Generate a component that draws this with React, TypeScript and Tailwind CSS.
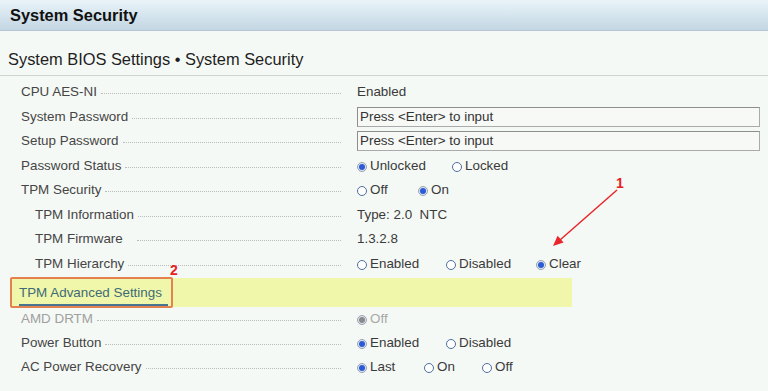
import React from "react";

type Opt = { label: string; on?: boolean; w: string };

type Row = {
  label: string;
  indent?: boolean;
  gap?: string;
  disabled?: boolean;
  kind: "text" | "input" | "radio";
  text?: string;
  opts?: Opt[];
};

const topRows: Row[] = [
  { label: "CPU AES-NI", kind: "text", text: "Enabled" },
  { label: "System Password", kind: "input", text: "Press <Enter> to input" },
  { label: "Setup Password", kind: "input", text: "Press <Enter> to input" },
  {
    label: "Password Status",
    kind: "radio",
    opts: [
      { label: "Unlocked", on: true, w: "w-[95px]" },
      { label: "Locked", w: "w-[80px]" },
    ],
  },
  {
    label: "TPM Security",
    kind: "radio",
    opts: [
      { label: "Off", w: "w-[61px]" },
      { label: "On", on: true, w: "w-[60px]" },
    ],
  },
  { label: "TPM Information", indent: true, kind: "text", text: "Type: 2.0\u00a0\u00a0NTC" },
  { label: "TPM Firmware", indent: true, gap: "ml-[14px]", kind: "text", text: "1.3.2.8" },
  {
    label: "TPM Hierarchy",
    indent: true,
    kind: "radio",
    opts: [
      { label: "Enabled", w: "w-[89px]" },
      { label: "Disabled", w: "w-[90px]" },
      { label: "Clear", on: true, w: "w-[70px]" },
    ],
  },
];

const bottomRows: Row[] = [
  {
    label: "AMD DRTM",
    disabled: true,
    kind: "radio",
    opts: [{ label: "Off", on: true, w: "w-[60px]" }],
  },
  {
    label: "Power Button",
    kind: "radio",
    opts: [
      { label: "Enabled", on: true, w: "w-[89px]" },
      { label: "Disabled", w: "w-[90px]" },
    ],
  },
  {
    label: "AC Power Recovery",
    kind: "radio",
    opts: [
      { label: "Last", on: true, w: "w-[67px]" },
      { label: "On", w: "w-[58px]" },
      { label: "Off", w: "w-[50px]" },
    ],
  },
];

function Radio({ on, disabled }: { on?: boolean; disabled?: boolean }) {
  if (on) {
    return (
      <span className="mt-[2px] flex h-[10px] w-[10px] items-center justify-center rounded-full border border-[#9aa3b2] bg-[#dfe4ec]">
        <span
          className={`h-[6px] w-[6px] rounded-full ${disabled ? "bg-[#8a8a8a]" : "bg-[#2b5bd6]"}`}
        />
      </span>
    );
  }
  return (
    <span className="mt-[2px] h-[10px] w-[10px] rounded-full border border-[#4f6f9f] bg-white" />
  );
}

function SettingRow({ row, h }: { row: Row; h: string }) {
  return (
    <div className={`flex items-center ${h}`}>
      <div
        className={`flex w-[341px] items-center ${row.indent ? "pl-[35px]" : "pl-[21px]"}`}
      >
        <span className={row.disabled ? "text-[#a0a0a0]" : "text-[#454545]"}>
          {row.label}
        </span>
        <span
          className={`mt-[3px] h-0 flex-1 border-t border-dotted border-[#bcbcbc] ${row.gap ?? "ml-[4px]"}`}
        />
      </div>
      <div className="ml-[16px] flex flex-1 items-center pr-[8px]">
        {row.kind === "text" && <span className="text-[#3a3a3a]">{row.text}</span>}
        {row.kind === "input" && (
          <div className="flex h-[20px] w-[403px] items-center border border-[#a9aaa9] border-t-[#8e8e8e] border-l-[#8e8e8e] bg-[#f7f9f7] pl-[2px] text-[#333]">
            {row.text}
          </div>
        )}
        {row.kind === "radio" &&
          row.opts!.map((o) => (
            <div key={o.label} className={`flex items-center gap-[3px] ${o.w}`}>
              <Radio on={o.on} disabled={row.disabled} />
              <span className={row.disabled ? "text-[#a8a8a8]" : "text-[#3a3a3a]"}>
                {o.label}
              </span>
            </div>
          ))}
      </div>
    </div>
  );
}

export default function App() {
  return (
    <div className="relative h-[391px] w-[768px] overflow-hidden bg-[#f5f9f5] font-['Liberation_Sans',Arial,sans-serif] text-[13.4px]">
      <div className="flex h-[31px] items-center border-b border-[#b7c4d4] bg-gradient-to-b from-[#e9f4f9] to-[#c3d6e3] pl-[10px] text-[16.4px] font-bold text-[#111]">
        System Security
      </div>
      <div className="h-[45px] border-b border-[#cfd3cf] pl-[8px] pt-[18px] text-[16.4px] leading-[20px] text-[#1e1e1e]">
        System BIOS Settings • System Security
      </div>

      <div className="pt-[4px]">
        {topRows.map((r) => (
          <SettingRow key={r.label} row={r} h="h-[24.5px]" />
        ))}

        <div className="ml-[10px] mt-[2px] flex h-[29px] w-[562px] bg-[#f0f7aa]">
          <div className="-mt-[1px] flex h-[31px] w-[163px] items-start rounded-[2px] border-2 border-[#e4824f] pl-[7px] pt-[6px]">
            <span className="border-b-2 border-[#4a7590] pb-[3px] pr-[6px] leading-[16px] text-[#3e6b78]">
              TPM Advanced Settings
            </span>
          </div>
        </div>

        {bottomRows.map((r) => (
          <SettingRow key={r.label} row={r} h="h-[24px]" />
        ))}
      </div>

      <svg
        className="pointer-events-none absolute left-0 top-0"
        width="768"
        height="391"
        viewBox="0 0 768 391"
      >
        <line x1="617" y1="190" x2="560" y2="240" stroke="#e8262b" strokeWidth="1.5" />
        <polygon points="553,246 563.6,242.6 557.6,235.8" fill="#e8262b" />
      </svg>
      <span className="absolute left-[616px] top-[176px] text-[14px] font-bold leading-[14px] text-[#e52222]">
        1
      </span>
      <span className="absolute left-[170px] top-[263px] text-[14px] font-bold leading-[14px] text-[#e52222]">
        2
      </span>
    </div>
  );
}
